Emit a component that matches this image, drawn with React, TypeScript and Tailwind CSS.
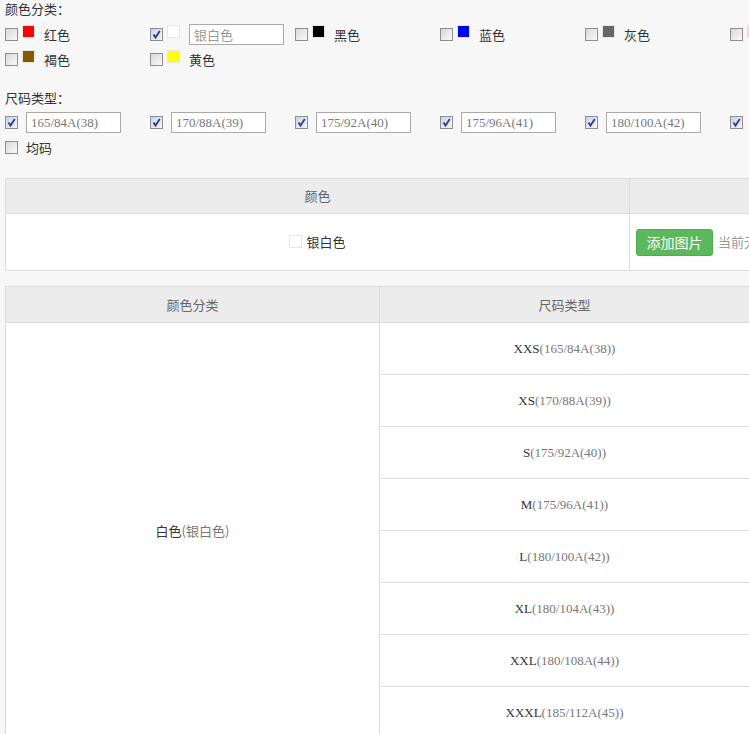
import { ReactNode } from "react";

const sans = "font-['Microsoft_YaHei','Noto_Sans_CJK_SC',sans-serif]";
const serif = "font-['Liberation_Serif','Noto_Sans_CJK_SC',serif]";

function Check({ checked }: { checked?: boolean }) {
  return (
    <span
      className={`relative inline-block w-[13px] h-[13px] shrink-0 border border-[#8e8e8e] ${
        checked ? "bg-gradient-to-br from-[#c9d3e6] to-[#f4f6fb]" : "bg-gradient-to-br from-[#d8d8d8] to-[#fafafa]"
      }`}
    >
      {checked && (
        <svg viewBox="0 0 11 11" className="absolute inset-0 w-[11px] h-[11px]">
          <path d="M2.5 5.5 L4.5 8.5 L8.8 2" fill="none" stroke="#2a3d8f" strokeWidth="1.8" />
        </svg>
      )}
    </span>
  );
}

function Swatch({ color }: { color: string }) {
  return <span className={`inline-block w-[13px] h-[13px] shrink-0 -mt-[6px] border border-[#e6e6e6] ${color}`} />;
}

const colors = [
  { name: "红色", color: "bg-[#ff0000]" },
  { name: "银白色", color: "bg-white", checked: true },
  { name: "黑色", color: "bg-black" },
  { name: "蓝色", color: "bg-[#0000ff]" },
  { name: "灰色", color: "bg-[#666666]" },
  { name: "粉红色", color: "bg-[#ffc0cb]" },
  { name: "紫色", color: "bg-[#800080]" },
  { name: "绿色", color: "bg-[#008000]" },
  { name: "褐色", color: "bg-[#855b00]" },
  { name: "黄色", color: "bg-[#ffff00]" },
];

const sizes = [
  { code: "XXS", spec: "165/84A(38)" },
  { code: "XS", spec: "170/88A(39)" },
  { code: "S", spec: "175/92A(40)" },
  { code: "M", spec: "175/96A(41)" },
  { code: "L", spec: "180/100A(42)" },
  { code: "XL", spec: "180/104A(43)" },
  { code: "XXL", spec: "180/108A(44)" },
  { code: "XXXL", spec: "185/112A(45)" },
];

function Item({ children }: { children: ReactNode }) {
  return <div className="w-[145px] h-[25px] flex items-center">{children}</div>;
}

export default function App() {
  return (
    <div className={`h-screen w-full overflow-hidden bg-[#f7f7f7] text-[13px] text-[#333] ${sans}`}>
      <div className="w-[1240px] pl-[5px]">
        {/* 颜色分类 */}
        <div className="h-[18px] leading-[18px]">颜色分类：</div>
        <div className="mt-[4px] flex flex-wrap w-[1160px]">
          {colors.map((c) => (
            <Item key={c.name}>
              <Check checked={c.checked} />
              <span className="ml-[4px] flex items-center">
                <Swatch color={c.color} />
              </span>
              {c.checked ? (
                <span className="ml-[9px] w-[95px] h-[21px] border border-[#a9a9a9] bg-white pl-[4px] leading-[19px] text-[#999]">
                  {c.name}
                </span>
              ) : (
                <span className="ml-[9px] leading-[18px]">{c.name}</span>
              )}
            </Item>
          ))}
        </div>

        {/* 尺码类型 */}
        <div className="mt-[17px] h-[18px] leading-[18px]">尺码类型：</div>
        <div className="mt-[3px] flex flex-wrap w-[1160px]">
          {sizes.map((s) => (
            <Item key={s.code}>
              <Check checked />
              <span className={`ml-[8px] w-[95px] h-[21px] border border-[#a9a9a9] bg-white pl-[4px] leading-[19px] text-[#777] ${serif}`}>
                {s.spec}
              </span>
            </Item>
          ))}
          <Item>
            <Check />
            <span className="ml-[8px] leading-[18px]">均码</span>
          </Item>
        </div>

        {/* 颜色图片 */}
        <table className="mt-[18px] w-[1230px] border-collapse bg-white">
          <thead>
            <tr className="h-[35px] bg-[#ececec] text-[#666]">
              <th className="w-[624px] border border-[#dcdcdc] font-normal">颜色</th>
              <th className="border border-[#dcdcdc] font-normal">图片</th>
            </tr>
          </thead>
          <tbody>
            <tr className="h-[57px]">
              <td className="border border-[#dcdcdc] text-center">
                <span className="inline-flex items-center">
                  <span className="inline-block w-[13px] h-[13px] border border-[#e6e6e6] bg-white mr-[4px]" />
                  银白色
                </span>
              </td>
              <td className="border border-[#dcdcdc] pl-[6px]">
                <div className="flex items-center">
                  <span className="inline-flex items-center justify-center w-[77px] h-[27px] rounded-[3px] bg-[#5cb85c] border border-[#4cae4c] text-white text-[14px]">
                    添加图片
                  </span>
                  <span className="ml-[5px] text-[#999]">当前无图片</span>
                </div>
              </td>
            </tr>
          </tbody>
        </table>

        {/* SKU 表 */}
        <table className="mt-[15px] w-[1230px] border-collapse bg-white">
          <thead>
            <tr className="h-[36px] bg-[#ececec] text-[#666]">
              <th className="w-[374px] border border-[#dcdcdc] font-normal">颜色分类</th>
              <th className="w-[370px] border border-[#dcdcdc] font-normal">尺码类型</th>
              <th className="border border-[#dcdcdc] font-normal">价格</th>
            </tr>
          </thead>
          <tbody>
            {sizes.map((s, i) => (
              <tr key={s.code} className="h-[52px]">
                {i === 0 && (
                  <td rowSpan={sizes.length} className="border border-[#dcdcdc] text-center">
                    白色<span className="text-[#777]">(银白色)</span>
                  </td>
                )}
                <td className={`border border-[#dcdcdc] text-center ${serif}`}>
                  {s.code}
                  <span className="text-[#777]">({s.spec})</span>
                </td>
                <td className="border border-[#dcdcdc]" />
              </tr>
            ))}
          </tbody>
        </table>
      </div>
    </div>
  );
}
